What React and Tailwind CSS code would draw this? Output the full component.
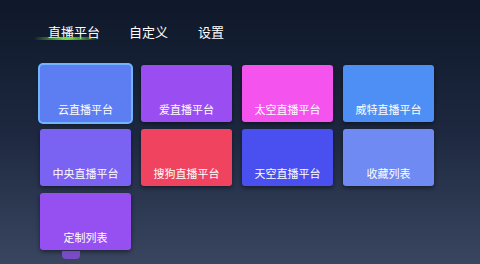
export default function App() {
  const tiles = [
    { name: "云直播平台", bg: "bg-[#5d7df3]", focus: true },
    { name: "爱直播平台", bg: "bg-[#9a4ef2]" },
    { name: "太空直播平台", bg: "bg-[#f453ee]" },
    { name: "威特直播平台", bg: "bg-[#4e8ff5]" },
    { name: "中央直播平台", bg: "bg-[#7a62f2]" },
    { name: "搜狗直播平台", bg: "bg-[#f0435f]" },
    { name: "天空直播平台", bg: "bg-[#4a4ff0]" },
    { name: "收藏列表", bg: "bg-[#6f8af2]" },
    { name: "定制列表", bg: "bg-[#9650f2]" },
  ];
  return (
    <div
      className="w-[480px] h-[264px] overflow-hidden bg-gradient-to-b from-[#0e1829] via-[#1d2840] to-[#3a4660] relative"
      style={{ fontFamily: '"Noto Sans CJK SC", "Noto Sans", sans-serif' }}
    >
      <div className="flex pl-[48px] pt-[23px] gap-[29px] text-[13px] leading-[18px] text-white relative">
        <div className="relative">
          直播平台
          <div className="absolute left-[-14px] top-[14px] w-[66px] h-[3px] rounded-full bg-gradient-to-r from-transparent via-[#6ee040] to-transparent"></div>
        </div>
        <div>自定义</div>
        <div className="ml-[1px]">设置</div>
      </div>
      <div className="grid grid-cols-[repeat(4,91px)] auto-rows-[57px] gap-x-[10px] gap-y-[7px] pl-[40px] pt-[24px]">
        {tiles.map((t) => (
          <div
            key={t.name}
            className={`${t.bg} rounded-[3px] flex items-end justify-center pb-[6px] text-[11px] leading-[13px] text-white shadow-[0_2px_4px_rgba(0,0,0,0.45)] ${
              t.focus ? "ring-2 ring-[#6fb6ff] shadow-[0_0_6px_2px_rgba(80,160,255,0.7)]" : ""
            }`}
          >
            {t.name}
          </div>
        ))}
      </div>
      <div className="absolute left-[62px] top-[251px] w-[18px] h-[8px] bg-[#8a4fe0] rounded-b-[4px] opacity-80"></div>
    </div>
  );
}
